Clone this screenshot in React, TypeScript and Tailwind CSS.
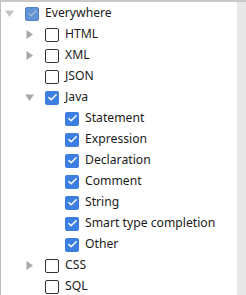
import { Check } from "lucide-react";

type Node = {
  label: string;
  level: number;
  arrow?: "right" | "down";
  checked?: boolean;
  dim?: boolean;
};

const rows: Node[] = [
  { label: "Everywhere", level: 0, arrow: "down", checked: true, dim: true },
  { label: "HTML", level: 1, arrow: "right" },
  { label: "XML", level: 1, arrow: "right" },
  { label: "JSON", level: 1 },
  { label: "Java", level: 1, arrow: "down", checked: true },
  { label: "Statement", level: 2, checked: true },
  { label: "Expression", level: 2, checked: true },
  { label: "Declaration", level: 2, checked: true },
  { label: "Comment", level: 2, checked: true },
  { label: "String", level: 2, checked: true },
  { label: "Smart type completion", level: 2, checked: true },
  { label: "Other", level: 2, checked: true },
  { label: "CSS", level: 1, arrow: "right" },
  { label: "SQL", level: 1 },
];

function Arrow({ dir, dim }: { dir: "right" | "down"; dim?: boolean }) {
  const color = dim ? "#c4c4c4" : "#a8a8a8";
  return (
    <svg width="9" height="9" viewBox="0 0 9 9">
      {dir === "down" ? (
        <path d="M0 1.5 L9 1.5 L4.5 8 Z" fill={color} />
      ) : (
        <path d="M1.5 0 L8 4.5 L1.5 9 Z" fill={color} />
      )}
    </svg>
  );
}

function Box({ checked, dim }: { checked?: boolean; dim?: boolean }) {
  if (!checked) {
    return <div className="w-[14px] h-[14px] rounded-[2px] border border-[#333333] bg-white" />;
  }
  if (dim) {
    return (
      <div className="w-[14px] h-[14px] rounded-[2px] border border-[#4f81c7] bg-[#6193d8] flex items-center justify-center">
        <Check size={11} strokeWidth={3} color="#a9bcd6" />
      </div>
    );
  }
  return (
    <div className="w-[14px] h-[14px] rounded-[2px] bg-[#3d7ee3] flex items-center justify-center">
      <Check size={11} strokeWidth={3.2} color="#ffffff" />
    </div>
  );
}

export default function App() {
  return (
    <div className="w-[246px] h-[295px] flex bg-white border-t-2 border-[#c9c9c9] overflow-hidden" style={{ fontFamily: '"Noto Sans", sans-serif' }}>
      <div className="flex-1 border-l border-[#bdbdbd] flex flex-col pt-[1px]">
        {rows.map((r) => (
          <div
            key={r.label}
            className="h-[21px] flex items-center shrink-0"
            style={{ paddingLeft: 4 + r.level * 20 }}
          >
            <div className="w-[20px] flex items-center">
              {r.arrow && <Arrow dir={r.arrow} dim={r.dim} />}
            </div>
            <Box checked={r.checked} dim={r.dim} />
            <span className="ml-[6px] text-[12.2px] text-[#1b1b1b] leading-none whitespace-nowrap">{r.label}</span>
          </div>
        ))}
      </div>
      <div className="w-[9px] bg-[#e8e8e8]" />
    </div>
  );
}
